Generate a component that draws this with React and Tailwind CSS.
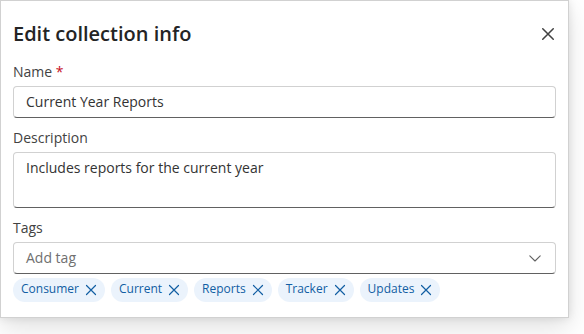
import React from "react";

const tags = ["Consumer", "Current", "Reports", "Tracker", "Updates"];

function XIcon({ className, w = "1.2" }) {
  return (
    <svg viewBox="0 0 12 12" className={className} fill="none" stroke="currentColor" strokeWidth={w} strokeLinecap="round">
      <path d="M1.5 1.5l9 9M10.5 1.5l-9 9" />
    </svg>
  );
}

export default function App() {
  return (
    <div className="w-[584px] h-[334px] bg-white font-['Open_Sans',sans-serif] text-[#242424]">
      <div className="w-[569px] h-[318px] bg-white border border-[#d1d1d1] shadow-[0_0_8px_rgba(0,0,0,0.10),0_10px_24px_rgba(0,0,0,0.12)] px-3 pt-[19px]">
        <div className="flex items-center justify-between h-7">
          <h1 className="text-[20px] leading-7 font-semibold text-[#242424]">Edit collection info</h1>
          <button className="w-4 h-4 flex items-center justify-center text-[#424242]">
            <XIcon className="w-[14px] h-[14px]" w="1.3" />
          </button>
        </div>

        <div className="mt-[14px] flex flex-col gap-1">
          <label className="text-[14px] leading-5 text-[#424242]">
            Name <span className="text-[#c50f1f]">*</span>
          </label>
          <div className="h-8 rounded border border-[#d1d1d1] border-b-[#616161] px-3 flex items-center text-[14px] leading-5 text-[#333333]">
            Current Year Reports
          </div>
        </div>

        <div className="mt-[10px] flex flex-col gap-1">
          <label className="text-[14px] leading-5 text-[#424242]">Description</label>
          <div className="h-14 rounded border border-[#d1d1d1] border-b-[#616161] px-3 pt-[5px] text-[14px] leading-5 text-[#333333]">
            Includes reports for the current year
          </div>
        </div>

        <div className="mt-[10px] flex flex-col gap-1">
          <label className="text-[14px] leading-5 text-[#424242]">Tags</label>
          <div className="h-8 rounded border border-[#d1d1d1] border-b-[#616161] pl-3 pr-[14px] flex items-center justify-between text-[14px] leading-5">
            <span className="text-[#707070]">Add tag</span>
            <svg viewBox="0 0 12 7" className="w-3 h-[7px] text-[#616161]" fill="none" stroke="currentColor" strokeWidth="1.1" strokeLinecap="round" strokeLinejoin="round">
              <path d="M0.8 0.8L6 6L11.2 0.8" />
            </svg>
          </div>
          <div className="flex gap-[6px]">
            {tags.map((t) => (
              <div key={t} className="h-6 rounded-full bg-[#ebf3fc] text-[#115ea3] px-2 flex items-center gap-[6px] text-[12px] leading-4 pb-[2px]">
                <span>{t}</span>
                <XIcon className="w-3 h-3 mt-[2px]" />
              </div>
            ))}
          </div>
        </div>
      </div>
    </div>
  );
}
